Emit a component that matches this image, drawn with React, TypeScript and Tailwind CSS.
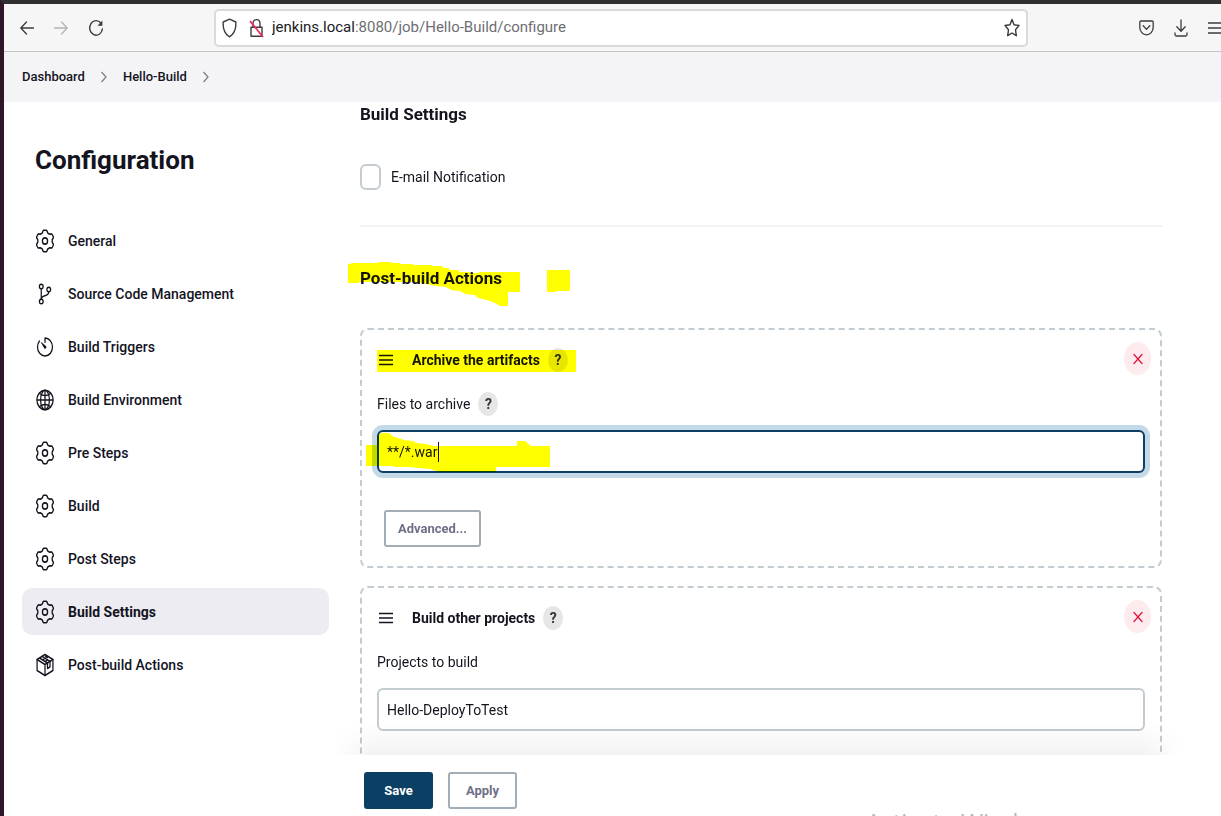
import type { ReactNode } from "react";
import { X } from "lucide-react";
import { IoGitBranchOutline, IoGlobeOutline, IoTimerOutline } from "react-icons/io5";

const ICON = "h-6 w-5 shrink-0";

// Outline of a six-lobed gear, sampled in polar steps around the centre.
const gearPath =
  Array.from({ length: 120 }, (_, i) => {
    const angle = (i / 120) * Math.PI * 2;
    const radius = 9.7 + 1.1 * Math.tanh(2.4 * Math.cos(6 * angle) + 0.3);
    const x = 12 + radius * Math.sin(angle);
    const y = 12 - radius * Math.cos(angle);
    return `${i === 0 ? "M" : "L"}${x.toFixed(2)} ${y.toFixed(2)}`;
  }).join("") + "Z";

function Gear() {
  return (
    <svg
      className={ICON}
      viewBox="0 0 24 24"
      preserveAspectRatio="none"
      fill="none"
      stroke="currentColor"
      strokeWidth="1.600"
      strokeLinejoin="round"
      aria-hidden
    >
      <path d={gearPath} />
      <circle cx="12" cy="12" r="3.100" />
    </svg>
  );
}

function PackageIcon() {
  return (
    <svg
      className={ICON}
      viewBox="0 0 24 24"
      preserveAspectRatio="none"
      fill="none"
      stroke="currentColor"
      strokeWidth="1.500"
      strokeLinejoin="round"
      strokeLinecap="round"
      aria-hidden
    >
      <path d="M12 1.500 21.500 6.500v11L12 22.500l-9.500-5v-11z" />
      <path d="M2.500 6.500 12 11.500l9.500-5M12 11.500v11" />
      <path d="M5.500 5 15 10v5.500l3-1.600V8.400L8.500 3.300M9 7l3.300-1.800M12 8.600l3.300-1.800M15 4.500l-2.500-1.200" />
    </svg>
  );
}

const navItems: { label: string; icon: ReactNode; active?: boolean }[] = [
  { label: "General", icon: <Gear /> },
  { label: "Source Code Management", icon: <IoGitBranchOutline className={ICON} preserveAspectRatio="none" /> },
  { label: "Build Triggers", icon: <IoTimerOutline className={ICON} preserveAspectRatio="none" /> },
  { label: "Build Environment", icon: <IoGlobeOutline className={ICON} preserveAspectRatio="none" /> },
  { label: "Pre Steps", icon: <Gear /> },
  { label: "Build", icon: <Gear /> },
  { label: "Post Steps", icon: <Gear /> },
  { label: "Build Settings", icon: <Gear />, active: true },
  { label: "Post-build Actions", icon: <PackageIcon /> },
];

function BrowserBar() {
  return (
    <header className="flex h-12 shrink-0 items-center border-b border-[#c4c4c6] bg-[#f6f6f6] pl-4 text-[#3c3c40]">
      <div className="flex w-[194px] shrink-0 items-center gap-5">
        <button aria-label="Back">
          <svg className="size-3.5" viewBox="0 0 14 14" fill="none" stroke="currentColor" strokeWidth="1.300" strokeLinecap="round" strokeLinejoin="round">
            <path d="M6.500 1 .8 7l5.700 6M1 7h12.500" />
          </svg>
        </button>
        <button aria-label="Forward" className="text-[#b4b4b6]">
          <svg className="size-3.5" viewBox="0 0 14 14" fill="none" stroke="currentColor" strokeWidth="1.300" strokeLinecap="round" strokeLinejoin="round">
            <path d="M7.500 1l5.700 6-5.700 6M13 7H.5" />
          </svg>
        </button>
        <button aria-label="Reload">
          <svg className="h-[18px] w-4" viewBox="0 0 16 18" fill="none" stroke="currentColor" strokeWidth="1.400" strokeLinecap="round">
            <path d="M12.800 4A6.400 7.300 0 1 0 14.400 10" />
            <path d="M14.400 1.500v5.300H9.500z" fill="currentColor" stroke="none" />
          </svg>
        </button>
      </div>
      <div className="flex h-[38px] min-w-0 flex-[811] items-center rounded-[5px] border-2 border-[#dadadc] bg-white px-1.5">
        <svg className="h-5 w-[15px] shrink-0" viewBox="0 0 15 20" fill="none" stroke="currentColor" strokeWidth="1.400" strokeLinejoin="round" aria-hidden>
          <path d="M7.500 1.200 13.800 4c.4 5.500-.8 11.500-6.300 14.800C2 15.500.8 9.500 1.200 4z" />
        </svg>
        <svg className="ml-3 h-5 w-[15px] shrink-0" viewBox="0 0 15 20" fill="none" stroke="currentColor" strokeWidth="1.400" strokeLinejoin="round" aria-hidden>
          <path d="M4 9V5.500C4 .3 11 .3 11 5.500V9M2 9.200h11v9H2z" />
          <path d="M1 3 14 19" stroke="#f02c58" strokeWidth="1.800" />
        </svg>
        <span className="ml-2 min-w-0 flex-1 truncate text-[15px] text-[#6d6d73]">
          <span className="text-[#202024]">jenkins.local</span>:8080/job/Hello-Build/configure
        </span>
        <button aria-label="Bookmark this page">
          <svg className="h-5 w-4" viewBox="0 0 16 20" fill="none" stroke="currentColor" strokeWidth="1.400" strokeLinejoin="round">
            <path d="m8 1.500 2 5.200 5 .8-3.500 4.200.8 6L8 15l-4.300 2.700.8-6L1 7.500l5-.8z" />
          </svg>
        </button>
      </div>
      <div className="flex flex-[196] items-center justify-end gap-5 overflow-hidden">
        <button aria-label="Save to Pocket">
          <svg className="h-4 w-[15px]" viewBox="0 0 15 16" fill="none" stroke="currentColor" strokeWidth="1.300" strokeLinecap="round" strokeLinejoin="round">
            <path d="M2 1h11c.7 0 1.200.5 1.200 1.200v5c0 4.300-3 7.600-6.700 7.600S.8 11.500.8 7.200v-5C.8 1.500 1.300 1 2 1z" />
            <path d="m4.200 5.800 3.300 3.600 3.300-3.600" />
          </svg>
        </button>
        <button aria-label="Downloads">
          <svg className="h-[18px] w-3.5" viewBox="0 0 14 18" fill="none" stroke="currentColor" strokeWidth="1.300" strokeLinecap="round" strokeLinejoin="round">
            <path d="M7 1v11M2.800 7.800 7 12.200l4.200-4.400M1 14v1.500C1 16.400 1.500 17 2.300 17h9.400c.8 0 1.300-.6 1.300-1.500V14" />
          </svg>
        </button>
        <button aria-label="Menu">
          <svg className="h-3.5 w-[13px]" viewBox="0 0 13 14" stroke="currentColor" strokeWidth="1.400">
            <path d="M0 2h13M0 7h13M0 12h13" />
          </svg>
        </button>
      </div>
    </header>
  );
}

function Chevron() {
  return (
    <svg className="h-3 w-2" viewBox="0 0 8 12" fill="none" stroke="#80808c" strokeWidth="1.300" aria-hidden>
      <path d="m1.500 1 4.500 5-4.500 5" />
    </svg>
  );
}

function Help({ label }: { label: string }) {
  return (
    <button
      type="button"
      aria-label={`Help for ${label}`}
      className="flex h-6 w-5 items-center justify-center rounded-[50%] bg-[#e6e6e6] text-sm font-bold text-[#333338]"
    >
      ?
    </button>
  );
}

function ActionCard({ title, children, highlight }: { title: string; children: ReactNode; highlight?: boolean }) {
  return (
    <section className="relative rounded-lg border-2 border-dashed border-[#c3ccd1] px-[15px] pt-[18px]">
      <div className="flex h-6 items-center">
        <svg className="h-3 w-[18px]" viewBox="0 0 18 12" stroke="currentColor" strokeWidth="1.500" aria-hidden>
          <path d="M2 1.500h14M2 6h14M2 10.500h14" />
        </svg>
        <h3 className="mr-2 ml-[17px] text-sm font-bold">{title}</h3>
        <Help label={title} />
      </div>
      {highlight && (
        <div className="pointer-events-none absolute top-5 left-[15px] h-[22px] w-[199px] bg-[#ffff00] mix-blend-multiply" />
      )}
      <button
        type="button"
        aria-label={`Delete ${title}`}
        className="absolute top-3 right-[9px] flex h-[33px] w-[27px] items-center justify-center rounded-[50%] bg-[#fdebed] text-[#e6143c]"
      >
        <X className="h-[18px] w-4" strokeWidth={2} preserveAspectRatio="none" />
      </button>
      {children}
    </section>
  );
}

const outlineButton =
  "rounded-[3px] border-2 border-[#a3adb6] bg-white text-[13px] font-bold text-[#6f6f88]";

export default function App() {
  return (
    <div className="flex h-screen flex-col overflow-hidden border-t-4 border-l-4 border-t-[#303030] border-l-[#301627] bg-white font-[Roboto,sans-serif] text-[#14141f]">
      <BrowserBar />
      <nav aria-label="Breadcrumb" className="flex h-[50px] shrink-0 items-center gap-[15px] bg-[#f4f4f7] pl-[18px] text-[13px] font-medium">
        <a href="#dashboard">Dashboard</a>
        <Chevron />
        <a href="#job">Hello-Build</a>
        <Chevron />
      </nav>

      <div className="flex min-h-0 flex-1 gap-[31px] pl-[18px]">
        <aside className="w-[307px] shrink-0">
          <h1 className="mt-10 ml-[13px] text-[26px] leading-9 font-bold">Configuration</h1>
          <nav aria-label="Configuration sections" className="mt-[39px] flex flex-col gap-1.5">
            {navItems.map((item) => (
              <a
                key={item.label}
                href="#section"
                aria-current={item.active ? "true" : undefined}
                className={
                  item.active
                    ? "flex h-[47px] items-center gap-[13px] rounded-[10px] bg-[#edecf2] px-[13px] text-sm font-bold"
                    : "flex h-[47px] items-center gap-[13px] rounded-[10px] px-[13px] text-sm font-medium"
                }
              >
                {item.icon}
                {item.label}
              </a>
            ))}
          </nav>
        </aside>

        <form className="relative flex min-w-0 flex-1 flex-col" onSubmit={(e) => e.preventDefault()}>
          <div className="min-h-0 flex-1 [clip-path:inset(0_0_0_-40px)]">
            <div className="mr-[59px]">
              <h2 className="text-[17px] leading-6 font-bold">Build Settings</h2>
              <label className="mt-9 flex h-[30px] items-center gap-2.5 text-sm">
                <input type="checkbox" className="h-[26px] w-[21px] appearance-none rounded-md border-2 border-[#c3ccd1] bg-white" />
                E-mail Notification
              </label>
              <hr className="mt-[33px] border-t-2 border-[#f3f3f6]" />
              <div className="relative mt-[39px]">
                <h2 className="text-[17px] leading-6 font-bold">Post-build Actions</h2>
                <svg className="pointer-events-none absolute -top-[4px] -left-[12px] h-[45px] w-[224px] mix-blend-multiply" viewBox="0 0 224 45" fill="#ffff00" aria-hidden>
                  <path d="M0 2h3V1h27V0h13v1h9v1h13v1h19v1h11v2h6v2h10v2h11v1h9v-1h41v20h-12v14h-8l-5-3-8-3-9-2-3-3-10-1-5-3-9-1-5-3-10-1-10-2-9-2H11v1H0z" />
                  <path d="M199 8h23v21h-14v1h-9z" />
                </svg>
              </div>

              <div className="mt-[38px] flex flex-col gap-[18px]">
                <ActionCard title="Archive the artifacts" highlight>
                  <div className="mt-5 flex h-6 items-center gap-2">
                    <label htmlFor="files" className="text-sm">Files to archive</label>
                    <Help label="Files to archive" />
                  </div>
                  <div className="relative mt-3.5">
                    <input
                      id="files"
                      defaultValue="**/*.war"
                      className="block h-[43px] w-full rounded-md border-2 border-[#0b4064] bg-white px-2 text-sm ring-[5px] ring-[#c3d9e7] outline-none"
                    />
                    <span className="absolute top-3 left-[61px] h-5 w-px bg-[#14141f]" />
                    <svg className="pointer-events-none absolute top-[2px] -left-[11px] h-[40px] w-[184px] mix-blend-multiply" viewBox="0 0 184 40" fill="#ffff00" aria-hidden>
                      <path d="M0 13h11V5l4-4h8l3 3 6 2 6 2 9 1 3 2 10 1 8 2h83v-5h8l6 5h19v21h-54v5H74l-10-3-12-1-9-1H28v-1H0z" />
                    </svg>
                  </div>
                  <button type="button" className={`${outlineButton} mt-[37px] mb-[19px] ml-[7px] h-[37px] w-[97px]`}>
                    Advanced...
                  </button>
                </ActionCard>

                <ActionCard title="Build other projects">
                  <label htmlFor="projects" className="mt-5 flex h-6 items-center text-sm">
                    Projects to build
                  </label>
                  <input
                    id="projects"
                    defaultValue="Hello-DeployToTest"
                    className="mt-3.5 mb-20 block h-[43px] w-full rounded-md border-2 border-[#c3ccd1] bg-white px-2 text-sm"
                  />
                </ActionCard>
              </div>
            </div>
          </div>

          <footer className="relative flex h-[61px] shrink-0 gap-[15px] bg-white pt-[17px] pl-1">
            <div className="pointer-events-none absolute right-10 bottom-full -left-[27px] h-8 bg-linear-to-b from-transparent to-black/5 [mask-image:linear-gradient(to_right,transparent,black_40px,black_calc(100%-40px),transparent)]" />
            <button type="submit" className="h-[37px] w-[69px] rounded-[3px] bg-[#0b4064] text-[13px] font-bold text-white">
              Save
            </button>
            <button type="button" className={`${outlineButton} h-[37px] w-[69px]`}>
              Apply
            </button>
            <div className="pointer-events-none absolute right-[140px] bottom-0 h-[5px] w-[215px] overflow-hidden font-['Open_Sans',sans-serif] text-2xl leading-6 whitespace-nowrap text-[#b8b8b8]">
              <span className="block -mt-px">Activate Windows</span>
            </div>
          </footer>
        </form>
      </div>
    </div>
  );
}
